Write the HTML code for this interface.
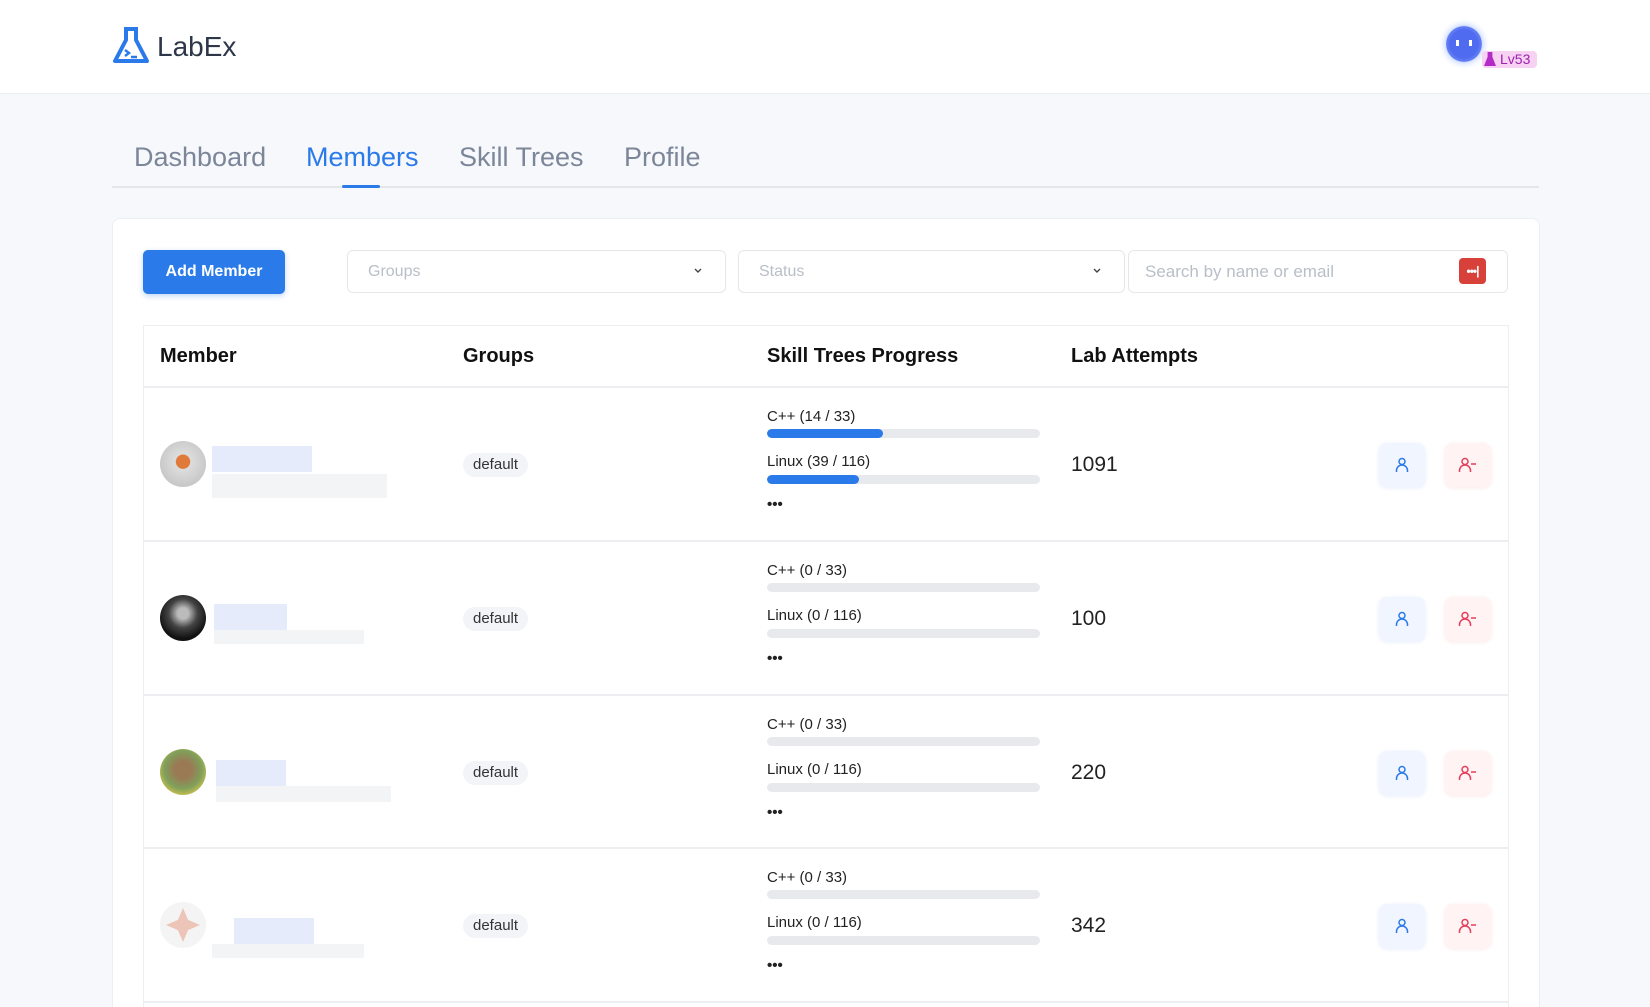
<!DOCTYPE html>
<html style="height:1007px;overflow:hidden"><head><meta charset="utf-8"><style>
*{box-sizing:border-box;margin:0;padding:0}
body{width:1650px;height:1007px;overflow:hidden;background:#f7f8fc;font-family:"Liberation Sans",sans-serif;position:relative;color:#1f2937}
.a{position:absolute}
.hdr{left:0;top:0;width:1650px;height:94px;background:#fff;border-bottom:1px solid #eceef3}
.tab{top:139px;font-size:27px;color:#7c8699;line-height:36px}
.card{left:112px;top:218px;width:1428px;height:789px;background:#fff;border:1px solid #eceef3;border-bottom:none;border-radius:8px 8px 0 0}
.sel{height:43px;border:1px solid #e5e7eb;border-radius:6px;background:#fff;font-size:16px;color:#b9bec7;line-height:41px;padding-left:20px}
.chev{position:absolute;right:22px;top:13px}
.th{font-size:20px;font-weight:bold;color:#111;top:345px}
.tag{background:#f2f4f8;border-radius:12px;font-size:15px;color:#333;padding:0 10px;line-height:24px}
.lbl{font-size:15px;color:#222}
.bar{width:273px;height:9px;background:#e8e9ed;border-radius:5px;overflow:hidden}
.bar i{display:block;height:100%;background:#2a7ae9;border-radius:5px}
.btn{width:46px;height:44px;border-radius:8px;display:flex;align-items:center;justify-content:center}
.bb{background:#f0f5ff;box-shadow:0 1px 4px rgba(40,100,230,.12)}
.br{background:#fff3f3;box-shadow:0 1px 4px rgba(230,60,60,.12)}
.num{font-size:21px;color:#222}
.line{height:2px;background:#eceef2}
</style></head><body>
<div class="a hdr"></div>
<svg class="a" style="left:111px;top:26px" width="40" height="40" viewBox="0 0 40 40"><path d="M13 3h14M15 3v11L4 35h32L25 14V3" fill="none" stroke="#2a7ae9" stroke-width="4" stroke-linejoin="round"/><path d="M14 24l4 3-4 3M20 31h6" stroke="#2a7ae9" stroke-width="2.4" fill="none"/></svg>
<div class="a" style="left:157px;top:31px;font-size:28px;color:#2d3748">LabEx</div>
<div class="a" style="left:1446px;top:26px;width:36px;height:36px;border-radius:50%;background:radial-gradient(circle,#4f6bf0 55%,#9bb3ff);box-shadow:0 0 8px #9bb8ff"></div>
<div class="a" style="left:1456px;top:40px;width:16px;height:6px;border-left:3px solid #fff;border-right:3px solid #fff"></div>
<div class="a" style="left:1482px;top:51px;width:55px;height:17px;background:#f8d2f2;border-radius:4px;font-size:14px;color:#9a24b0;line-height:17px;padding-left:18px">Lv53</div>
<div class="a" style="left:1484px;top:52px;width:12px;height:14px;background:#b42cc8;clip-path:polygon(30% 0,70% 0,70% 35%,100% 100%,0 100%,30% 35%)"></div>

<div class="a tab" style="left:134px">Dashboard</div>
<div class="a tab" style="left:306px;color:#2a7ae9">Members</div>
<div class="a tab" style="left:459px">Skill Trees</div>
<div class="a tab" style="left:624px">Profile</div>
<div class="a" style="left:112px;top:186px;width:1427px;height:2px;background:#e3e6eb"></div>
<div class="a" style="left:342px;top:185px;width:38px;height:3px;background:#2a7ae9;border-radius:2px"></div>

<div class="a card"></div>
<div class="a" style="left:143px;top:250px;width:142px;height:44px;background:#2a7ae9;border-radius:5px;color:#fff;font-size:16px;font-weight:bold;text-align:center;line-height:44px;box-shadow:0 2px 6px rgba(42,122,233,.3)">Add Member</div>
<div class="a sel" style="left:347px;top:250px;width:379px">Groups<svg class="chev" width="10" height="14"><path d="M2 5l3 3 3-3" stroke="#444" stroke-width="1.4" fill="none"/></svg></div>
<div class="a sel" style="left:738px;top:250px;width:387px">Status<svg class="chev" width="10" height="14"><path d="M2 5l3 3 3-3" stroke="#444" stroke-width="1.4" fill="none"/></svg></div>
<div class="a sel" style="left:1128px;top:250px;width:380px;font-size:17px;padding-left:16px">Search by name or email</div>
<div class="a" style="left:1459px;top:258px;width:27px;height:26px;background:#d8413a;border-radius:4px;color:#fff;font-size:12px;line-height:26px;text-align:center;letter-spacing:-1px;font-weight:bold">•••|</div>

<div class="a" style="left:143px;top:325px;width:1366px;height:682px;border:1px solid #eceef2;border-bottom:none"></div>
<div class="a th" style="left:160px">Member</div>
<div class="a th" style="left:463px">Groups</div>
<div class="a th" style="left:767px">Skill Trees Progress</div>
<div class="a th" style="left:1071px">Lab Attempts</div>

<div class="a line" style="left:143px;top:386px;width:1366px"></div>
<div class="a line" style="left:143px;top:540px;width:1366px"></div>
<div class="a line" style="left:143px;top:694px;width:1366px"></div>
<div class="a line" style="left:143px;top:847px;width:1366px"></div>
<div class="a line" style="left:143px;top:1001px;width:1366px"></div>

<!-- row 1 -->
<div class="a" style="left:160px;top:441px;width:46px;height:46px;border-radius:50%;background:radial-gradient(circle at 50% 45%,#e07a3a 20%,#ddd 22%,#c8c8c8 70%)"></div>
<div class="a" style="left:212px;top:446px;width:100px;height:26px;background:#e6ebfb"></div>
<div class="a" style="left:212px;top:474px;width:175px;height:24px;background:#f3f4f5"></div>
<div class="a tag" style="left:463px;top:453px">default</div>
<div class="a lbl" style="left:767px;top:408px">C++ (14 / 33)</div>
<div class="a bar" style="left:767px;top:429px"><i style="width:116px"></i></div>
<div class="a lbl" style="left:767px;top:453px">Linux (39 / 116)</div>
<div class="a bar" style="left:767px;top:475px"><i style="width:92px"></i></div>
<div class="a lbl" style="left:767px;top:496px;font-weight:bold">•••</div>
<div class="a num" style="left:1071px;top:453px">1091</div>

<!-- row 2 -->
<div class="a" style="left:160px;top:595px;width:46px;height:46px;border-radius:50%;background:radial-gradient(circle at 50% 40%,#bbb 15%,#444 40%,#111 70%)"></div>
<div class="a" style="left:214px;top:604px;width:73px;height:26px;background:#e6ebfb"></div>
<div class="a" style="left:214px;top:630px;width:150px;height:14px;background:#f3f4f5"></div>
<div class="a tag" style="left:463px;top:607px">default</div>
<div class="a lbl" style="left:767px;top:562px">C++ (0 / 33)</div>
<div class="a bar" style="left:767px;top:583px"></div>
<div class="a lbl" style="left:767px;top:607px">Linux (0 / 116)</div>
<div class="a bar" style="left:767px;top:629px"></div>
<div class="a lbl" style="left:767px;top:650px;font-weight:bold">•••</div>
<div class="a num" style="left:1071px;top:607px">100</div>

<!-- row 3 -->
<div class="a" style="left:160px;top:749px;width:46px;height:46px;border-radius:50%;background:radial-gradient(circle at 50% 45%,#9a7a55 25%,#7fa05a 55%,#d8c450 80%)"></div>
<div class="a" style="left:216px;top:760px;width:70px;height:26px;background:#e6ebfb"></div>
<div class="a" style="left:216px;top:786px;width:175px;height:16px;background:#f3f4f5"></div>
<div class="a tag" style="left:463px;top:761px">default</div>
<div class="a lbl" style="left:767px;top:716px">C++ (0 / 33)</div>
<div class="a bar" style="left:767px;top:737px"></div>
<div class="a lbl" style="left:767px;top:761px">Linux (0 / 116)</div>
<div class="a bar" style="left:767px;top:783px"></div>
<div class="a lbl" style="left:767px;top:804px;font-weight:bold">•••</div>
<div class="a num" style="left:1071px;top:761px">220</div>

<!-- row 4 -->
<div class="a" style="left:160px;top:902px;width:46px;height:46px;border-radius:50%;background:#f4f4f4"></div>
<div class="a" style="left:166px;top:908px;width:34px;height:34px;background:#edc4b8;clip-path:polygon(50% 0,65% 35%,100% 50%,65% 65%,50% 100%,35% 65%,0 50%,35% 35%)"></div>
<div class="a" style="left:234px;top:918px;width:80px;height:26px;background:#e6ebfb"></div>
<div class="a" style="left:212px;top:944px;width:152px;height:14px;background:#f3f4f5"></div>
<div class="a tag" style="left:463px;top:914px">default</div>
<div class="a lbl" style="left:767px;top:869px">C++ (0 / 33)</div>
<div class="a bar" style="left:767px;top:890px"></div>
<div class="a lbl" style="left:767px;top:914px">Linux (0 / 116)</div>
<div class="a bar" style="left:767px;top:936px"></div>
<div class="a lbl" style="left:767px;top:957px;font-weight:bold">•••</div>
<div class="a num" style="left:1071px;top:914px">342</div>

<!-- buttons -->
<div class="a btn bb" style="left:1379px;top:443px"><svg width="18" height="18" viewBox="0 0 18 18"><circle cx="9" cy="5.5" r="3" fill="none" stroke="#2a7ae9" stroke-width="1.5"/><path d="M3.5 16v-1.5a5.5 5.5 0 0 1 11 0V16" fill="none" stroke="#2a7ae9" stroke-width="1.5"/></svg></div>
<div class="a btn br" style="left:1445px;top:443px"><svg width="20" height="18" viewBox="0 0 20 18"><circle cx="7" cy="5.5" r="3" fill="none" stroke="#e53e5a" stroke-width="1.5"/><path d="M1.5 16v-1.5a5.5 5.5 0 0 1 11 0V16M13 8h5" fill="none" stroke="#e53e5a" stroke-width="1.5"/></svg></div>
<div class="a btn bb" style="left:1379px;top:597px"><svg width="18" height="18" viewBox="0 0 18 18"><circle cx="9" cy="5.5" r="3" fill="none" stroke="#2a7ae9" stroke-width="1.5"/><path d="M3.5 16v-1.5a5.5 5.5 0 0 1 11 0V16" fill="none" stroke="#2a7ae9" stroke-width="1.5"/></svg></div>
<div class="a btn br" style="left:1445px;top:597px"><svg width="20" height="18" viewBox="0 0 20 18"><circle cx="7" cy="5.5" r="3" fill="none" stroke="#e53e5a" stroke-width="1.5"/><path d="M1.5 16v-1.5a5.5 5.5 0 0 1 11 0V16M13 8h5" fill="none" stroke="#e53e5a" stroke-width="1.5"/></svg></div>
<div class="a btn bb" style="left:1379px;top:751px"><svg width="18" height="18" viewBox="0 0 18 18"><circle cx="9" cy="5.5" r="3" fill="none" stroke="#2a7ae9" stroke-width="1.5"/><path d="M3.5 16v-1.5a5.5 5.5 0 0 1 11 0V16" fill="none" stroke="#2a7ae9" stroke-width="1.5"/></svg></div>
<div class="a btn br" style="left:1445px;top:751px"><svg width="20" height="18" viewBox="0 0 20 18"><circle cx="7" cy="5.5" r="3" fill="none" stroke="#e53e5a" stroke-width="1.5"/><path d="M1.5 16v-1.5a5.5 5.5 0 0 1 11 0V16M13 8h5" fill="none" stroke="#e53e5a" stroke-width="1.5"/></svg></div>
<div class="a btn bb" style="left:1379px;top:904px"><svg width="18" height="18" viewBox="0 0 18 18"><circle cx="9" cy="5.5" r="3" fill="none" stroke="#2a7ae9" stroke-width="1.5"/><path d="M3.5 16v-1.5a5.5 5.5 0 0 1 11 0V16" fill="none" stroke="#2a7ae9" stroke-width="1.5"/></svg></div>
<div class="a btn br" style="left:1445px;top:904px"><svg width="20" height="18" viewBox="0 0 20 18"><circle cx="7" cy="5.5" r="3" fill="none" stroke="#e53e5a" stroke-width="1.5"/><path d="M1.5 16v-1.5a5.5 5.5 0 0 1 11 0V16M13 8h5" fill="none" stroke="#e53e5a" stroke-width="1.5"/></svg></div>
</body></html>
